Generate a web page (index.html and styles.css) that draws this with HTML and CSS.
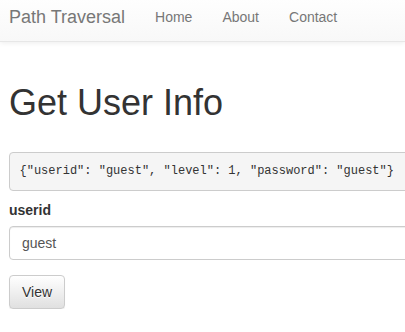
FILE: index.html
```html
<!DOCTYPE html>
<html lang="en">
  <head>
    <meta charset="UTF-8" />
    <meta name="viewport" content="width=device-width, initial-scale=1.0" />
    <title>Path Traversal</title>
    <link rel="stylesheet" href="styles.css">
  </head>
  <body>

    <nav class="navbar">
      <a class="brand" href="#">Path Traversal</a>
      <ul class="nav">
        <li><a href="#">Home</a></li>
        <li><a href="#">About</a></li>
        <li><a href="#">Contact</a></li>
      </ul>
    </nav>

    <div class="container">
      <h1>Get User Info</h1>
      <pre class="result">{"userid": "guest", "level": 1, "password": "guest"}</pre>

      <form class="user-form">
        <div class="form-group">
          <label for="userid">userid</label>
          <input type="text" id="userid" class="form-control" value="guest" />
        </div>
        <button type="submit" class="btn">View</button>
      </form>
    </div>

  </body>
</html>
```

FILE: styles.css
```css
body {
  margin: 0;
  overflow: hidden;
  font-family: "Liberation Sans", Arial, sans-serif;
  font-size: 14px;
  line-height: 1.42857;
  color: #333;
  background: #fff;
}

.navbar {
  display: flex;
  align-items: flex-start;
  height: 49px;
  margin-top: -8px;
  margin-bottom: 20px;
  padding-left: 9px;
  background: linear-gradient(to bottom, #fff 0%, #f8f8f8 100%);
  border-bottom: 1px solid #e7e7e7;
  box-shadow: 0 1px 5px rgba(0, 0, 0, 0.075);
}
.brand {
  padding: 15px 15px 15px 0;
  font-size: 18px;
  line-height: 20px;
  color: #777;
  text-decoration: none;
}
.nav {
  display: flex;
  margin: 0;
  padding: 0;
  list-style: none;
}
.nav a {
  display: block;
  padding: 15px;
  line-height: 20px;
  color: #777;
  text-decoration: none;
}

.container {
  width: 620px;
  padding-left: 9px;
}

h1 {
  margin: 41px 0 10px;
  font-size: 36px;
  font-weight: 500;
  line-height: 1.1;
}

.result {
  margin: 29px 0 10px;
  padding: 9.5px;
  font-family: "Liberation Mono", Consolas, monospace;
  font-size: 12px;
  line-height: 18.6px;
  color: #333;
  background: #f5f5f5;
  border: 1px solid #ccc;
  border-radius: 4px;
}

.form-group {
  margin-bottom: 15px;
}
label {
  display: block;
  margin-bottom: 5px;
  font-weight: bold;
}
.form-control {
  display: block;
  box-sizing: border-box;
  width: 100%;
  height: 34px;
  padding: 6px 12px;
  font-family: inherit;
  font-size: 14px;
  color: #555;
  background: #fff;
  border: 1px solid #ccc;
  border-radius: 4px;
  box-shadow: inset 0 1px 1px rgba(0, 0, 0, 0.075);
}

.btn {
  height: 34px;
  padding: 6px 12px;
  font-family: inherit;
  font-size: 14px;
  line-height: 20px;
  color: #333;
  background: linear-gradient(to bottom, #fff 0%, #e0e0e0 100%);
  border: 1px solid #ccc;
  border-radius: 4px;
  text-shadow: 0 1px 0 #fff;
  box-shadow: inset 0 1px 0 rgba(255, 255, 255, 0.15), 0 1px 1px rgba(0, 0, 0, 0.075);
}
```
